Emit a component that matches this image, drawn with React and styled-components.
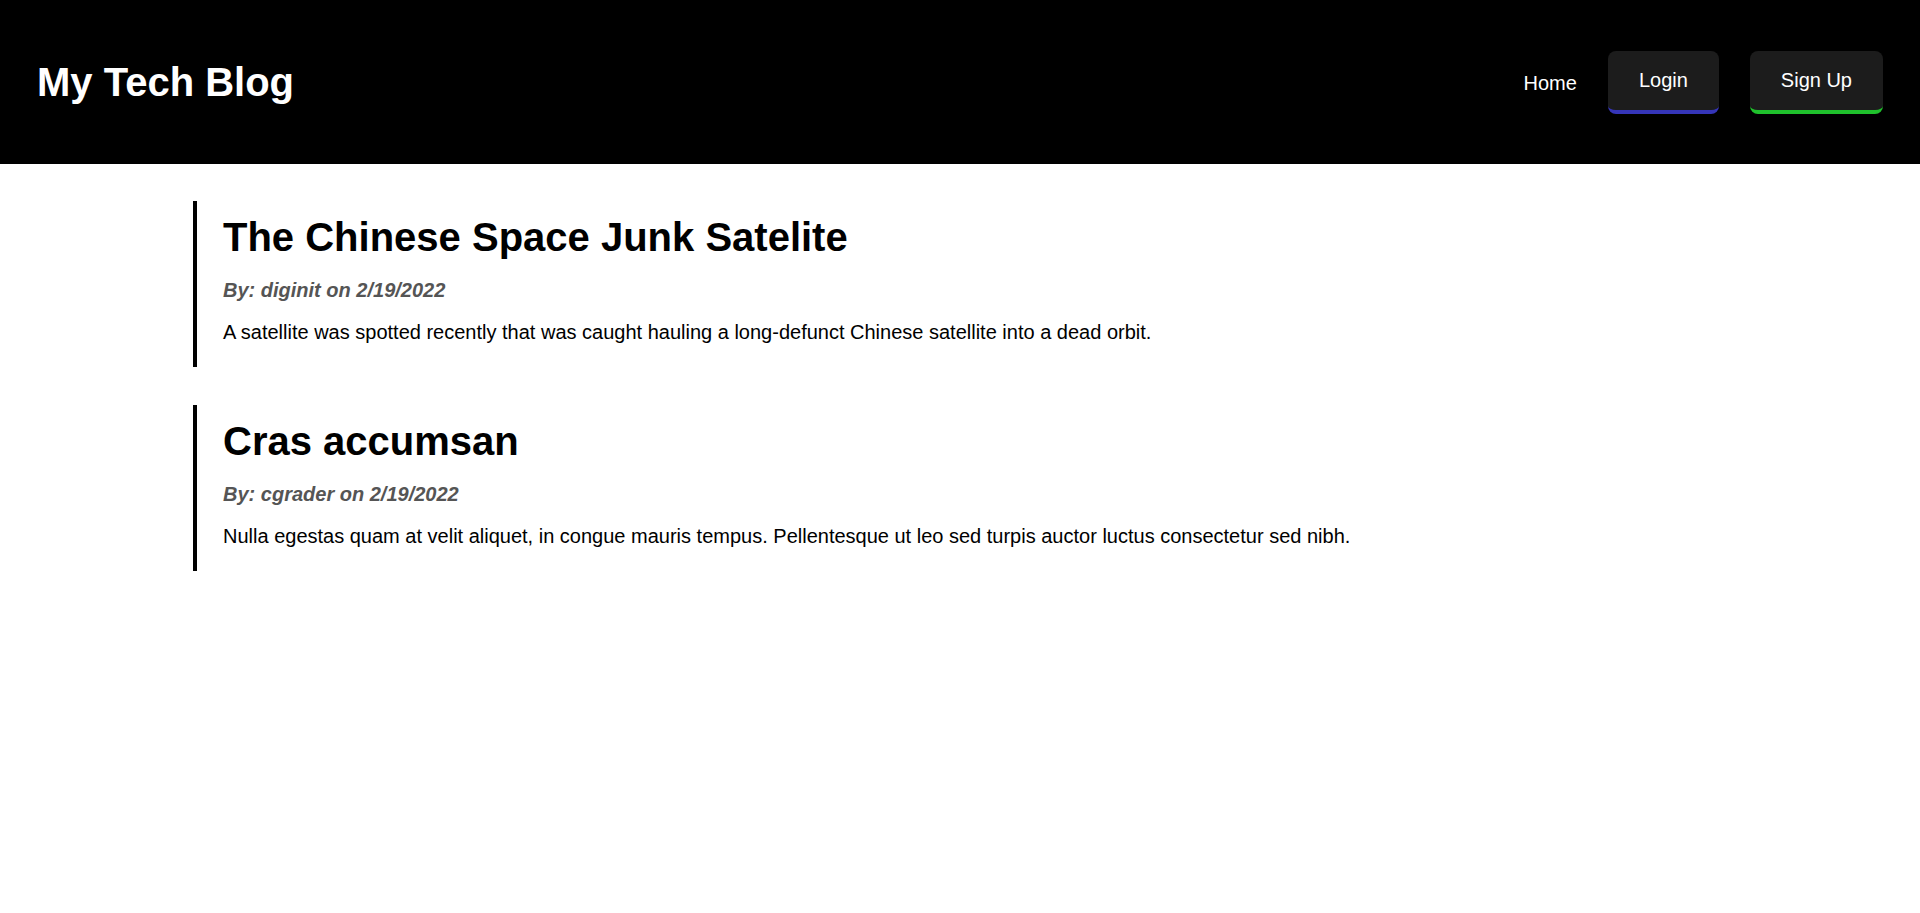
import React from "react";
import styled, { createGlobalStyle } from "styled-components";

const posts = [
  {
    id: 1,
    title: "The Chinese Space Junk Satelite",
    author: "diginit",
    date: "2/19/2022",
    body: "A satellite was spotted recently that was caught hauling a long-defunct Chinese satellite into a dead orbit.",
  },
  {
    id: 2,
    title: "Cras accumsan",
    author: "cgrader",
    date: "2/19/2022",
    body: "Nulla egestas quam at velit aliquet, in congue mauris tempus. Pellentesque ut leo sed turpis auctor luctus consectetur sed nibh.",
  },
];

export default function App() {
  return (
    <>
      <GlobalStyle />
      <Header>
        <Brand>My Tech Blog</Brand>
        <Nav>
          <NavLink href="#">Home</NavLink>
          <NavButton accent="#3535b8">Login</NavButton>
          <NavButton accent="#1fc12c">Sign Up</NavButton>
        </Nav>
      </Header>
      <Main>
        {posts.map((post) => (
          <Post key={post.id}>
            <Title>{post.title}</Title>
            <Byline>
              By: {post.author} on {post.date}
            </Byline>
            <Body>{post.body}</Body>
          </Post>
        ))}
      </Main>
    </>
  );
}

const GlobalStyle = createGlobalStyle`
  body {
    margin: 0;
    background: #ffffff;
    font-family: "Liberation Sans", Arial, sans-serif;
  }
`;

const Header = styled.header`
  display: flex;
  justify-content: space-between;
  align-items: center;
  height: 164px;
  padding: 0 37px;
  background-color: #000000;
`;

const Brand = styled.h1`
  margin: 0;
  color: #ffffff;
  font-size: 40px;
  font-weight: 700;
`;

const Nav = styled.nav`
  display: flex;
  align-items: center;
  gap: 31px;
`;

const NavLink = styled.a`
  color: #ffffff;
  font-size: 20px;
  text-decoration: none;
  margin-top: 2px;
`;

const NavButton = styled.button`
  font-family: "Liberation Sans", Arial, sans-serif;
  font-size: 20px;
  line-height: 23px;
  color: #ffffff;
  background-color: #1c1c1c;
  border: none;
  border-bottom: 4px solid ${(props) => props.accent};
  border-radius: 8px;
  padding: 18px 31px 18px;
  cursor: pointer;
`;

const Main = styled.main`
  display: flex;
  flex-direction: column;
  gap: 38px;
  padding: 37px 10% 40px;
`;

const Post = styled.article`
  border-left: 4px solid #000000;
  padding: 13px 0 10px 26px;
  margin-left: 1px;
`;

const Title = styled.h2`
  margin: 0 0 19px;
  font-size: 40px;
  line-height: 46px;
  font-weight: 700;
  color: #000000;
`;

const Byline = styled.p`
  margin: 0 0 19px;
  font-size: 20px;
  line-height: 23px;
  font-weight: 700;
  font-style: italic;
  color: #555555;
`;

const Body = styled.p`
  margin: 0 0 13px;
  font-size: 20px;
  line-height: 23px;
  color: #000000;
`;
